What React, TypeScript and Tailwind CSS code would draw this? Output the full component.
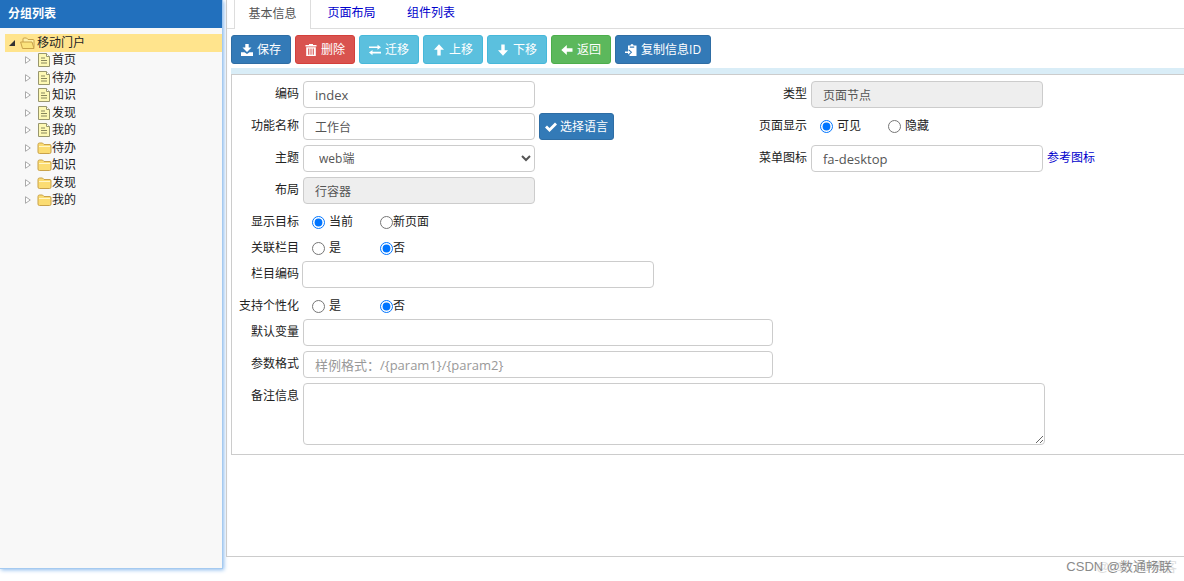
import type { ReactNode } from "react";

type NodeIcon = "page" | "folder";

const nodes: { label: string; icon: NodeIcon }[] = [
  { label: "首页", icon: "page" },
  { label: "待办", icon: "page" },
  { label: "知识", icon: "page" },
  { label: "发现", icon: "page" },
  { label: "我的", icon: "page" },
  { label: "待办", icon: "folder" },
  { label: "知识", icon: "folder" },
  { label: "发现", icon: "folder" },
  { label: "我的", icon: "folder" },
];

const Glyph = ({ children }: { children: ReactNode }) => (
  <svg viewBox="0 0 12 12" className="h-3 w-3 shrink-0" fill="currentColor" aria-hidden="true">
    {children}
  </svg>
);

const SaveGlyph = () => (
  <Glyph>
    <path d="M4.300 0h3.400v3.500H10.500L6 8 1.500 3.500h2.800z" />
    <path d="M0 8.300h3.500L6 10l2.500-1.700H12V12H0z" />
  </Glyph>
);

const TrashGlyph = () => (
  <Glyph>
    <path
      fillRule="evenodd"
      d="M4 0h4v1h3.500v1.500h-11V1H4zM1.200 3.200h9.600V12H1.200zM3 4.500v6.200h.8V4.500zm1.700 0v6.200h.8V4.500zm1.800 0v6.200h.8V4.500zm1.700 0v6.200H9V4.500z"
    />
  </Glyph>
);

const TransferGlyph = () => (
  <Glyph>
    <path d="M0 2.500h8.500V.8L12 3.300 8.500 5.800V4.100H0zM12 7.800H3.500V6.100L0 8.600l3.500 2.600V9.400H12z" />
  </Glyph>
);

const ArrowGlyph = ({ className }: { className?: string }) => (
  <svg viewBox="0 0 12 12" className={`h-3 w-3 shrink-0 ${className ?? ""}`} fill="currentColor" aria-hidden="true">
    <path d="M6 .3 11 5.800H7.700v5.700H4.300V5.800H1z" />
  </svg>
);

const CopyGlyph = () => (
  <Glyph>
    <path
      fillRule="evenodd"
      d="M3 1.500h2.500a1.500 1.500 0 0 1 3 0H11.500V12H4.500v-1.200L7.200 8.300 4.500 5.800H3zM4.800 2.500v1.200h4.400V2.500z"
    />
    <path d="M0 7.500h3V6l2.800 2.300L3 10.600V9H0z" />
  </Glyph>
);

const CheckGlyph = () => (
  <Glyph>
    <path d="M0 6.500 2 4.500l2.500 2.500L10 1.500l2 2L4.500 11z" />
  </Glyph>
);

const FolderIcon = () => (
  <svg viewBox="0 0 15 12" className="h-3 w-[15px] shrink-0" aria-hidden="true">
    <path d="M1 2.500Q1 1 2.500 1h3L7 2.500h6Q14 2.500 14 4v6q0 1.500-1.500 1.500h-10Q1 11.500 1 10z" fill="#fbdc72" stroke="#c9a24a" />
    <path d="M2 4.500h11" stroke="#fff6c8" />
  </svg>
);

const OpenFolderIcon = () => (
  <svg viewBox="0 0 15 12" className="h-3 w-[15px] shrink-0" aria-hidden="true">
    <path d="M3 10.500V2q0-1 1-1h2.500L8 2.500h5q1 0 1 1v7z" fill="#fff0a8" stroke="#c9a24a" />
    <path d="M.6 5H12l2 6.500H2.500z" fill="#fbe37d" stroke="#c9a24a" />
  </svg>
);

const PageIcon = () => (
  <svg viewBox="0 0 12 14" className="h-[14px] w-3 shrink-0" aria-hidden="true">
    <path d="M.5.5h8l3 3v10H.5z" fill="#fdf8b4" stroke="#98966e" />
    <path d="M8.500.5v3h3" fill="#fff" stroke="#98966e" />
    <path d="M3 5h4M3 7.500h6M3 10h6" stroke="#88865c" />
  </svg>
);

const Sidebar = () => (
  <aside className="flex w-[223px] shrink-0 flex-col self-stretch border-r border-b border-[#a5caf0] bg-[#f8f8f8] shadow-[1px_1px_4px_#8dbbed]">
    <h1 className="h-7 bg-[#2270bd] px-2 text-[12px] leading-7 font-bold text-white">分组列表</h1>
    <ul className="mt-[6px] ml-[5px] flex h-[175px] flex-col leading-4">
      <li className="flex flex-1 items-center bg-[#ffe48d]">
        <svg viewBox="0 0 6 6" className="ml-1 h-[6px] w-[6px]" aria-hidden="true">
          <path d="M6 0v6H0z" fill="#333" />
        </svg>
        <span className="ml-[5px] flex items-center gap-[2px]">
          <OpenFolderIcon />
          移动门户
        </span>
      </li>
      {nodes.map((node, i) => (
        <li key={i} className="flex flex-1 items-center pl-5">
          <svg viewBox="0 0 6 8" className="h-2 w-[6px]" aria-hidden="true">
            <path d="M.5.7v6.600L5.300 4z" fill="#fff" stroke="#aaa" />
          </svg>
          <span className="ml-[5px] flex items-center">
            <span className="flex w-4 justify-center">{node.icon === "page" ? <PageIcon /> : <FolderIcon />}</span>
            {node.label}
          </span>
        </li>
      ))}
    </ul>
  </aside>
);

const btn = "flex h-[29px] items-center gap-1 rounded-[3px] border px-[9px] text-white whitespace-nowrap";
const primary = "border-[#2e6da4] bg-[#337ab7]";
const info = "border-[#46b8da] bg-[#5bc0de]";

const Toolbar = () => (
  <div className="flex flex-wrap gap-1 pb-1">
    <button type="button" className={`${btn} ${primary}`}><SaveGlyph />保存</button>
    <button type="button" className={`${btn} border-[#d43f3a] bg-[#d9534f]`}><TrashGlyph />删除</button>
    <button type="button" className={`${btn} ${info}`}><TransferGlyph />迁移</button>
    <button type="button" className={`${btn} ${info}`}><ArrowGlyph />上移</button>
    <button type="button" className={`${btn} ${info}`}><ArrowGlyph className="rotate-180" />下移</button>
    <button type="button" className={`${btn} border-[#4cae4c] bg-[#5cb85c]`}><ArrowGlyph className="-rotate-90" />返回</button>
    <button type="button" className={`${btn} ${primary}`}><CopyGlyph />复制信息ID</button>
  </div>
);

const control = "h-[27px] rounded-[4px] border border-[#ccc] px-[11px] text-[#555] placeholder:text-[#999]";
const disabled = "bg-[#eee]";

const Label = ({ id, wide, children }: { id?: string; wide?: boolean; children: ReactNode }) => {
  const cls = `${wide ? "w-[99px]" : "w-[67px]"} shrink-0 pt-1 text-right leading-[18px]`;
  return id ? <label htmlFor={id} className={cls}>{children}</label> : <span className={cls}>{children}</span>;
};

type RadiosProps = {
  name: string;
  label: string;
  options: string[];
  value: number;
  spaced?: boolean;
};

const Radios = ({ name, label, options, value, spaced }: RadiosProps) => (
  <div role="radiogroup" aria-label={label} className="flex h-[26px] items-center pl-[9px]">
    {options.map((option, i) => (
      <label key={option} className={`flex items-center ${i === 0 ? "w-[68px]" : ""} ${i === 0 || spaced ? "gap-1" : ""}`}>
        <input type="radio" name={name} defaultChecked={i === value} className="h-[13px] w-[13px]" />
        {option}
      </label>
    ))}
  </div>
);

const InfoForm = () => (
  <form className="border-y border-l border-[#ccc] pt-[6px] pb-[9px]">
    <div className="grid grid-cols-2">
      <div className="flex h-8 gap-1">
        <Label id="code">编码</Label>
        <input id="code" defaultValue="index" className={`${control} w-[232px] text-[13px]`} />
      </div>
      <div className="flex h-8 gap-1">
        <Label id="type" wide>类型</Label>
        <input id="type" readOnly value="页面节点" className={`${control} ${disabled} w-[232px]`} />
      </div>
      <div className="flex h-8 gap-1">
        <Label id="name">功能名称</Label>
        <input id="name" defaultValue="工作台" className={`${control} w-[232px]`} />
        <button type="button" className={`flex h-[27px] items-center gap-[3px] rounded-[3px] border px-[5px] text-white ${primary}`}>
          <CheckGlyph />
          选择语言
        </button>
      </div>
      <div className="flex h-8 gap-1">
        <Label wide>页面显示</Label>
        <Radios name="visible" label="页面显示" options={["可见", "隐藏"]} value={0} spaced />
      </div>
      <div className="flex h-8 gap-1">
        <Label id="theme">主题</Label>
        <select id="theme" className="h-[27px] w-[232px] rounded-[4px] border border-[#ccc] bg-white pl-[11px] text-[#555]">
          <option>web端</option>
        </select>
      </div>
      <div className="flex h-8 gap-1">
        <Label id="icon" wide>菜单图标</Label>
        <input id="icon" defaultValue="fa-desktop" className={`${control} w-[232px] text-[13px]`} />
        <a href="#icons" className="pt-1 leading-[18px] text-[#00c]">参考图标</a>
      </div>
    </div>
    <div className="flex h-8 gap-1">
      <Label id="layout">布局</Label>
      <input id="layout" readOnly value="行容器" className={`${control} ${disabled} w-[232px]`} />
    </div>
    <div className="flex gap-1">
      <Label>显示目标</Label>
      <Radios name="target" label="显示目标" options={["当前", "新页面"]} value={0} />
    </div>
    <div className="flex gap-1">
      <Label>关联栏目</Label>
      <Radios name="related" label="关联栏目" options={["是", "否"]} value={1} />
    </div>
    <div className="flex h-8 gap-[3px]">
      <Label id="column">栏目编码</Label>
      <input id="column" className={`${control} w-[352px]`} />
    </div>
    <div className="flex gap-1">
      <Label>支持个性化</Label>
      <Radios name="personal" label="支持个性化" options={["是", "否"]} value={1} />
    </div>
    <div className="flex h-8 gap-1">
      <Label id="vars">默认变量</Label>
      <input id="vars" className={`${control} w-[470px]`} />
    </div>
    <div className="flex h-8 gap-1">
      <Label id="params">参数格式</Label>
      <input id="params" placeholder="样例格式：/{param1}/{param2}" className={`${control} w-[470px] text-[13px]`} />
    </div>
    <div className="flex gap-1">
      <Label id="remark">备注信息</Label>
      <textarea id="remark" className="h-[62px] w-[742px] rounded-[4px] border border-[#ccc] px-3 py-1 text-[#555]" />
    </div>
  </form>
);

export default function App() {
  return (
    <div className="relative flex min-h-screen bg-white pb-3 font-['Open_Sans','Noto_Sans_CJK_SC',sans-serif] text-[12px] leading-[18px] text-[#222]">
      <Sidebar />
      <main className="mb-3 ml-[3px] flex min-w-0 flex-1 flex-col border-b border-l border-[#ccc]">
        <nav className="flex h-[29px] border-b border-[#ddd] pl-[7px]">
          <a href="#info" className="-mb-px flex h-[29px] w-[77px] items-center justify-center border-x border-[#ddd] bg-white pb-[2px] text-[#555]">基本信息</a>
          <a href="#layout" className="flex w-[81px] items-center justify-center pb-[2px] text-[#00c]">页面布局</a>
          <a href="#parts" className="flex w-[78px] items-center justify-center pb-[2px] text-[#00c]">组件列表</a>
        </nav>
        <div className="pt-[6px] pl-1">
          <Toolbar />
          <div className="h-[6px] bg-[#d9edf7]" />
          <InfoForm />
        </div>
      </main>
      <div className="absolute right-[7px] bottom-[5px] font-['Liberation_Sans','Noto_Sans_CJK_SC',sans-serif] text-[13px] text-[#ddd]">@51CTO博客</div>
      <div className="absolute right-3 bottom-[5px] font-['Liberation_Sans','Noto_Sans_CJK_SC',sans-serif] text-[13px] text-[#8a8a8a]">CSDN @数通畅联</div>
    </div>
  );
}
